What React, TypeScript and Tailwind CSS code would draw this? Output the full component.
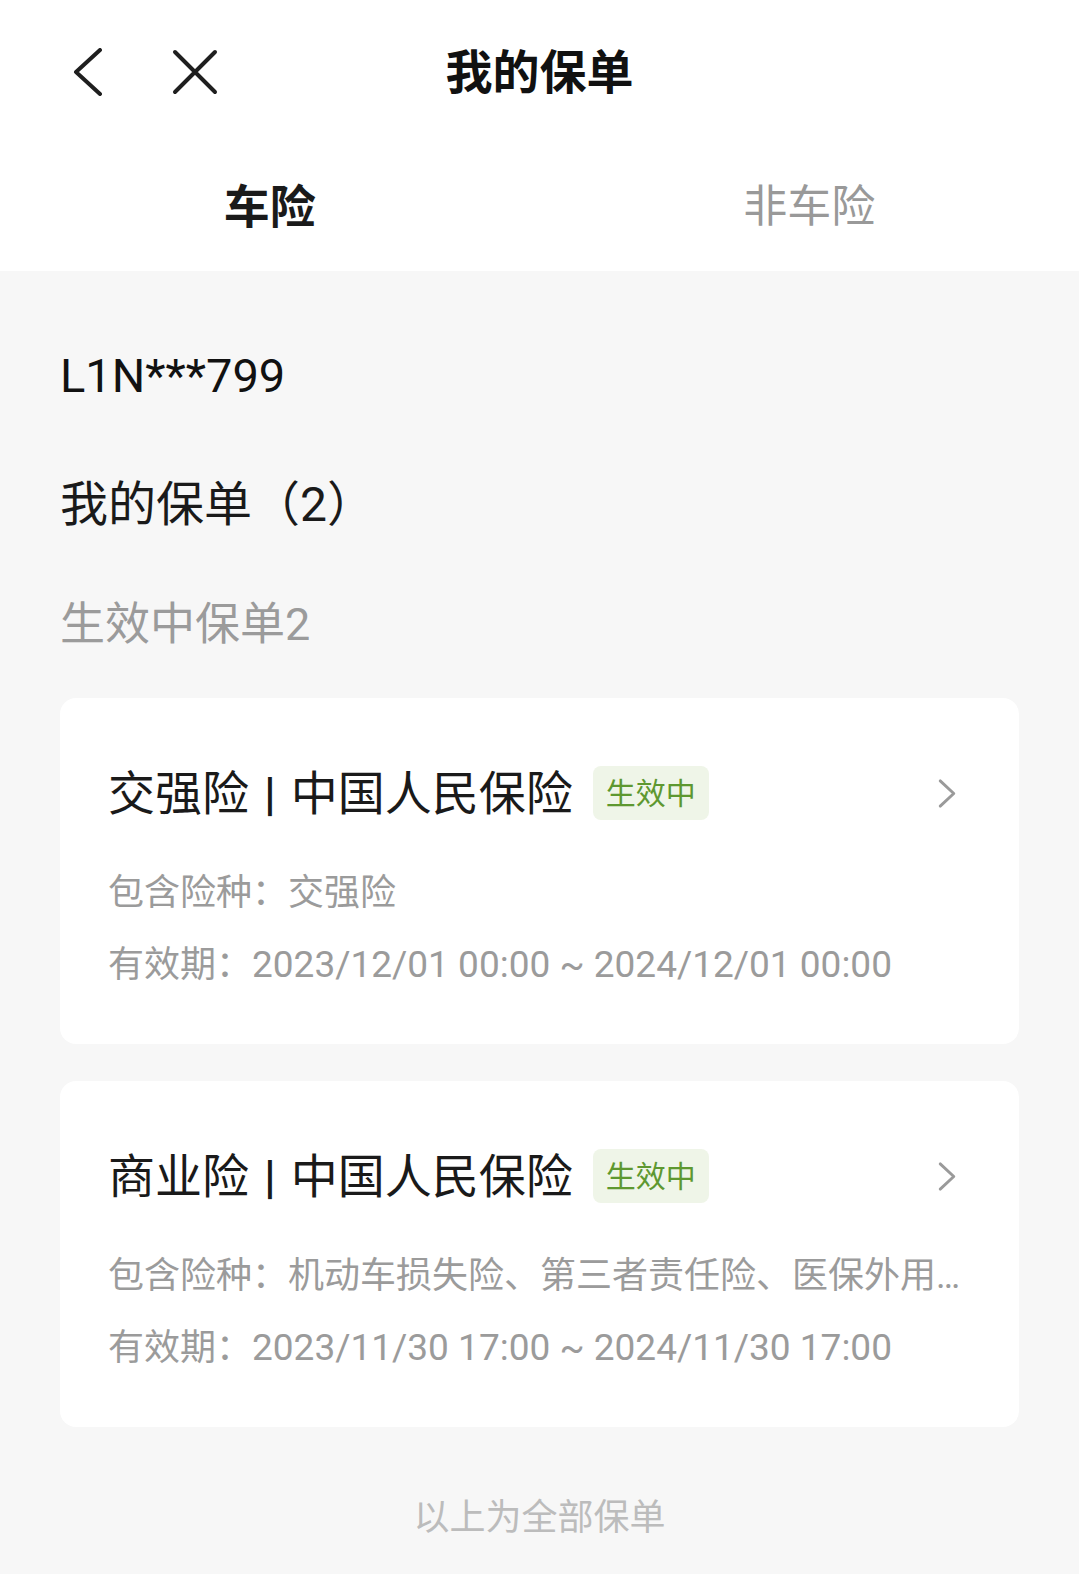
const FONT = { fontFamily: 'Roboto, "Noto Sans CJK SC", sans-serif' };

const POLICIES = [
  {
    kind: "交强险",
    company: "中国人民保险",
    kinds: "包含险种：交强险",
    period: "2023/12/01 00:00 ~ 2024/12/01 00:00",
  },
  {
    kind: "商业险",
    company: "中国人民保险",
    kinds: "包含险种：机动车损失险、第三者责任险、医保外用药责任险",
    period: "2023/11/30 17:00 ~ 2024/11/30 17:00",
  },
];

function Chevron({ className }: { className?: string }) {
  return (
    <svg viewBox="0 0 20 32" className={className} fill="none" stroke="currentColor" strokeWidth={3} strokeLinecap="round" strokeLinejoin="round">
      <path d="M3 3 L17 16 L3 29" />
    </svg>
  );
}

function PolicyCard({ p }: { p: (typeof POLICIES)[number] }) {
  return (
    <div className="rounded-[16px] bg-white pt-[68px] pb-[54px] pl-[48px] pr-[62px]">
      <div className="flex h-[54px] items-center">
        <span className="whitespace-nowrap text-[47px] leading-none text-[#1a1a1a]">
          {p.kind}
          <span className="mx-[15px] font-semibold">|</span>
          {p.company}
        </span>
        <span className="ml-[20px] flex h-[54px] items-center rounded-[8px] bg-[#eff5e8] px-[13px] text-[30px] text-[#5e9830]">生效中</span>
        <Chevron className="ml-auto h-[31px] w-[20px] text-[#9a9a9a]" />
      </div>
      <div className="mt-[48px] mr-[-16px] h-[50px] truncate text-[36px] leading-[50px] text-[#9b9b9b]">{p.kinds}</div>
      <div className="mt-[22px] h-[50px] whitespace-nowrap text-[36px] leading-[50px] text-[#9b9b9b]">
        有效期：<span className="text-[37px]">{p.period}</span>
      </div>
    </div>
  );
}

export default function App() {
  return (
    <div className="flex min-h-[1574px] flex-col bg-[#f7f7f7]" style={FONT}>
      {/* header */}
      <div className="bg-white">
        <div className="relative flex h-[144px] items-center">
          <svg viewBox="0 0 32 48" className="ml-[71px] h-[48px] w-[32px] text-[#1f1f1f]" fill="none" stroke="currentColor" strokeWidth={4} strokeLinecap="round" strokeLinejoin="round">
            <path d="M29 2 L5 24 L29 46" />
          </svg>
          <svg viewBox="0 0 46 46" className="ml-[69px] h-[46px] w-[46px] text-[#1f1f1f]" fill="none" stroke="currentColor" strokeWidth={4} strokeLinecap="round">
            <path d="M3 3 L43 43 M43 3 L3 43" />
          </svg>
          <h1 className="absolute inset-x-0 text-center text-[47px] font-bold leading-none text-[#111]">我的保单</h1>
        </div>
        <div className="grid h-[127px] grid-cols-2 items-start">
          <div className="pt-[33px] text-center text-[46px] font-bold leading-[60px] text-[#1a1a1a]">车险</div>
          <div className="pt-[33px] text-center text-[44px] leading-[60px] text-[#999]">非车险</div>
        </div>
      </div>

      {/* body */}
      <div className="flex flex-col px-[60px]">
        <div className="mt-[75px] h-[60px] text-[47px] leading-[60px] text-[#111]">L1N***799</div>
        <div className="mt-[69px] h-[60px] text-[48px] leading-[60px] text-[#1a1a1a]">我的保单（2）</div>
        <div className="mt-[60px] h-[60px] text-[45px] leading-[60px] text-[#9b9b9b]">生效中保单2</div>
        <div className="mt-[43px] flex flex-col gap-[37px]">
          {POLICIES.map((p) => (
            <PolicyCard key={p.kind} p={p} />
          ))}
        </div>
        <div className="mt-[66px] h-[50px] text-center text-[36px] leading-[50px] text-[#bcbcbc]">以上为全部保单</div>
      </div>
    </div>
  );
}
